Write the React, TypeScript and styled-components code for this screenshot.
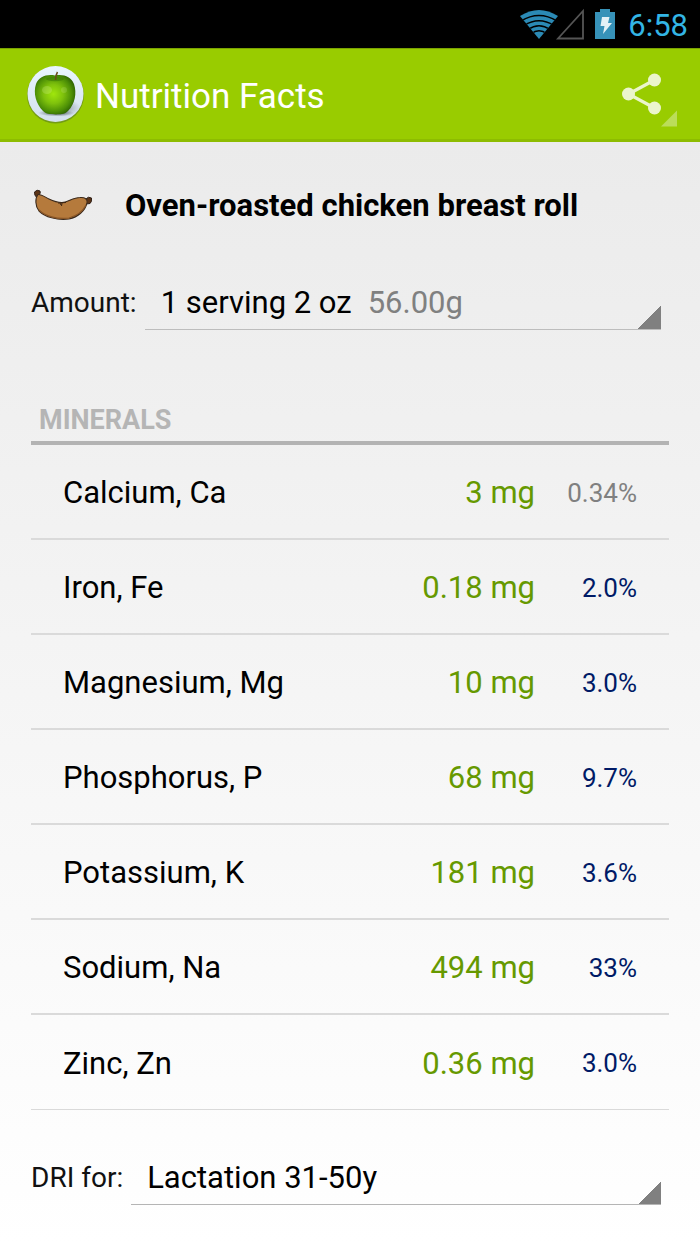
import React from "react";
import styled, { createGlobalStyle } from "styled-components";

const GlobalStyle = createGlobalStyle`
  * { box-sizing: border-box; }
  body {
    margin: 0;
    background: #fff;
    color: #000;
    font-family: Roboto, "Liberation Sans", sans-serif;
  }
`;

const Screen = styled.div`
  display: flex;
  flex-direction: column;
  min-height: 100vh;
`;

const StatusBar = styled.div`
  display: flex;
  align-items: center;
  justify-content: flex-end;
  height: 48px;
  padding-right: 12px;
  background: #000;
`;

const StatusIcons = styled.svg`
  display: block;
  width: 98px;
  height: 48px;
`;

const Clock = styled.time`
  padding: 3px 0 0 11px;
  color: #33b5e5;
  font-size: 31px;
  line-height: 48px;
`;

const AppBar = styled.header`
  display: flex;
  align-items: center;
  height: 94px;
  padding: 0 20px 0 26px;
  background: #99cc00;
  border-top: 1px solid #7ba300;
  border-bottom: 3px solid #8dbc00;
`;

const AppIcon = styled.svg`
  display: block;
  width: 58px;
  height: 60px;
`;

const Title = styled.h1`
  flex: 1;
  margin: 0;
  padding: 6px 0 0 11px;
  color: #fff;
  font-size: 35px;
  font-weight: 400;
  line-height: 44px;
`;

const ShareButton = styled.button`
  padding: 0;
  border: 0;
  background: none;
  cursor: pointer;

  svg {
    display: block;
    width: 60px;
    height: 76px;
  }
`;

const Content = styled.main`
  flex: 1;
  padding: 32px 31px 39px;
  background: linear-gradient(#ebebeb, #fff);
`;

const Food = styled.div`
  display: flex;
  align-items: center;
  height: 64px;
`;

const FoodIcon = styled.svg`
  display: block;
  width: 64px;
  height: 40px;
`;

const FoodName = styled.h2`
  margin: 0;
  padding-left: 30px;
  font-size: 31px;
  font-weight: 700;
  line-height: 40px;
`;

const Field = styled.div<{ $top: number }>`
  display: flex;
  padding: ${(p) => p.$top}px 8px 0 0;
`;

const FieldLabel = styled.label`
  padding-right: 8px;
  color: #111;
  font-size: 28px;
  line-height: 52px;
  white-space: nowrap;
`;

const Spinner = styled.div<{ $line: string }>`
  display: flex;
  flex: 1;
  gap: 16px;
  height: 53px;
  padding-left: 16px;
  border-bottom: 1px solid ${(p) => p.$line};
  background: linear-gradient(135deg, transparent 50%, #808080 50%) right bottom / 24px 24px no-repeat;
  background-origin: border-box;
  background-clip: border-box;
  font-size: 31px;
  line-height: 52px;
`;

const Select = styled.select<{ $fill?: boolean }>`
  flex: ${(p) => (p.$fill ? "1" : "none")};
  field-sizing: content;
  height: 52px;
  margin: 0;
  padding: 0;
  border: 0;
  border-radius: 0;
  appearance: none;
  background: none;
  color: #000;
  font: inherit;
  cursor: pointer;
`;

const Weight = styled.output`
  color: #808080;
`;

const SectionTitle = styled.h3`
  margin: 0;
  padding: 72px 8px 3px;
  border-bottom: 4px solid #b3b3b3;
  color: #b5b5b5;
  font-size: 27px;
  font-weight: 700;
  line-height: 36px;
`;

const Table = styled.table`
  width: 100%;
  border-collapse: separate;
  border-spacing: 0;
`;

const Row = styled.tr`
  th,
  td {
    height: 95px;
    padding-top: 2px;
    border-bottom: 2px solid #dadada;
  }

  &:last-child th,
  &:last-child td {
    border-bottom-width: 1px;
  }
`;

const Nutrient = styled.th`
  padding: 0 0 0 32px;
  font-size: 31px;
  font-weight: 400;
  text-align: left;
`;

const Quantity = styled.td`
  padding: 0;
  color: #669900;
  font-size: 31px;
  text-align: right;
`;

const Percent = styled.td<{ $low?: boolean }>`
  width: 134px;
  padding: 0 32px 0 0;
  color: ${(p) => (p.$low ? "#808080" : "#001a66")};
  font-size: 26px;
  text-align: right;
`;

const minerals = [
  { name: "Calcium, Ca", quantity: "3 mg", percent: "0.34%", low: true },
  { name: "Iron, Fe", quantity: "0.18 mg", percent: "2.0%" },
  { name: "Magnesium, Mg", quantity: "10 mg", percent: "3.0%" },
  { name: "Phosphorus, P", quantity: "68 mg", percent: "9.7%" },
  { name: "Potassium, K", quantity: "181 mg", percent: "3.6%" },
  { name: "Sodium, Na", quantity: "494 mg", percent: "33%" },
  { name: "Zinc, Zn", quantity: "0.36 mg", percent: "3.0%" },
];

function DeviceIcons() {
  return (
    <StatusIcons viewBox="0 0 98 48" aria-hidden="true">
      <defs>
        <clipPath id="fan">
          <path d="M20 39 L1 16 Q20 4 39 16Z" />
        </clipPath>
      </defs>
      <g clipPath="url(#fan)">
        <rect width="44" height="48" fill="#2b8ab5" />
        <g fill="none" stroke="#000" strokeWidth="1.500">
          <path d="M2 21 Q20 10 38 21" />
          <path d="M5 25.500 Q20 16 35 25.500" />
          <path d="M9 29.500 Q20 22 31 29.500" />
          <path d="M12 34 Q20 27.500 28 34" />
        </g>
      </g>
      <path d="M39 38.500 L64 11 V38.500Z" fill="none" stroke="#555" strokeWidth="1.800" />
      <path d="M76 12 h5 v-3 h10 v3 h5 v27 H76Z" fill="#3792b8" />
      <path d="M83 17 h7.500 l-1.500 6 h4 L84 34 l1.500 -8 h-4Z" fill="#e4f1f6" />
    </StatusIcons>
  );
}

function AppleIcon() {
  return (
    <AppIcon viewBox="0 0 58 60" aria-hidden="true">
      <defs>
        <radialGradient id="appleSkin" cx="0.46" cy="0.48" r="0.6">
          <stop offset="0" stopColor="#a0e60c" />
          <stop offset="0.4" stopColor="#7fc20c" />
          <stop offset="0.75" stopColor="#4c8f06" />
          <stop offset="1" stopColor="#265802" />
        </radialGradient>
        <radialGradient id="appleShadow">
          <stop offset="0" stopColor="#1b2a20" stopOpacity="0.9" />
          <stop offset="1" stopColor="#55606a" stopOpacity="0" />
        </radialGradient>
        <linearGradient id="plate" x1="0" y1="0" x2="0" y2="1">
          <stop offset="0" stopColor="#e9f6ff" />
          <stop offset="1" stopColor="#d3e0ee" />
        </linearGradient>
      </defs>
      <circle cx="29.500" cy="31" r="28.500" fill="#5c7d22" opacity="0.6" />
      <circle cx="29.500" cy="30" r="28" fill="url(#plate)" />
      <ellipse cx="37" cy="44" rx="18" ry="9" fill="url(#appleShadow)" opacity="0.5" />
      <ellipse cx="30" cy="49" rx="18" ry="3.500" fill="url(#appleShadow)" />
      <path
        d="M29 11.500 C38 10 45 13 48 20 C51 29 49 40 42 47 C38 51 34 50 30 50.500 C26 50 21 51 17 47 C10 40 7 29 10 20 C13 13 20 10 29 11.500Z"
        fill="url(#appleSkin)"
      />
      <ellipse cx="29" cy="15" rx="9" ry="2.200" fill="#397606" opacity="0.55" />
      <ellipse cx="21" cy="26" rx="5" ry="4" fill="#e9ffc0" opacity="0.2" />
      <ellipse cx="38" cy="26" rx="3" ry="3" fill="#e9ffc0" opacity="0.15" />
      <path d="M29.500 16 C29.500 12.500 30 10.500 31.500 8" fill="none" stroke="#6b4a1c" strokeWidth="1.500" />
    </AppIcon>
  );
}

function ShareIcon() {
  return (
    <svg viewBox="0 0 60 76" aria-hidden="true">
      <g fill="#ebf5cc">
        <path d="M34.500 24 L8.500 38 L34.500 52" fill="none" stroke="#ebf5cc" strokeWidth="3.200" />
        <circle cx="8.500" cy="38" r="6.500" />
        <circle cx="34.500" cy="24" r="6.500" />
        <circle cx="34.500" cy="52" r="6.500" />
      </g>
      <path d="M57 54.500 V70.500 H41Z" fill="#bbdd59" />
    </svg>
  );
}

function SausageIcon() {
  return (
    <FoodIcon viewBox="0 0 64 40" aria-hidden="true">
      <path d="M3.500 6 Q6 3 9 5 Q10 7 8 9 L6 12 Q3 9 3.500 6Z" fill="#5c3416" stroke="#2e2018" strokeWidth="1" />
      <path d="M55 13 Q57 10 60.500 12 Q61 16 59 17.500 L55 18Z" fill="#5c3416" stroke="#2e2018" strokeWidth="1" />
      <path
        d="M7 8.500 C10 8 14 11 18 13 C23 15.500 27 16.500 31 16.500 C37 16 42 11.500 49 11.500 C54 11 57 13.500 56 17 C54 25 47 31 38 33 C26 34.500 14 31 8 25 C4 20 4 12 7 8.500Z"
        fill="#b57a3c"
        stroke="#3b2a1c"
        strokeWidth="1.100"
      />
      <path d="M8 24 C14 30 26 33.500 38 32 C45 30 52 25 55 19" fill="none" stroke="#8a5626" strokeWidth="1.200" />
      <path d="M27 17 L35 16.500 M31 17 L30.500 20 M29 17 L30 19" fill="none" stroke="#3b2412" strokeWidth="1" />
    </FoodIcon>
  );
}

export default function App() {
  return (
    <Screen>
      <GlobalStyle />
      <StatusBar>
        <DeviceIcons />
        <Clock>6:58</Clock>
      </StatusBar>
      <AppBar>
        <AppleIcon />
        <Title>Nutrition Facts</Title>
        <ShareButton type="button" aria-label="Share">
          <ShareIcon />
        </ShareButton>
      </AppBar>
      <Content>
        <Food>
          <SausageIcon />
          <FoodName>Oven-roasted chicken breast roll</FoodName>
        </Food>
        <Field $top={39}>
          <FieldLabel htmlFor="amount">Amount:</FieldLabel>
          <Spinner $line="#bdbdbd">
            <Select id="amount">
              <option>1 serving 2 oz</option>
            </Select>
            <Weight htmlFor="amount">56.00g</Weight>
          </Spinner>
        </Field>
        <SectionTitle id="minerals">MINERALS</SectionTitle>
        <Table aria-labelledby="minerals">
          <tbody>
            {minerals.map((m) => (
              <Row key={m.name}>
                <Nutrient scope="row">{m.name}</Nutrient>
                <Quantity>{m.quantity}</Quantity>
                <Percent $low={m.low}>{m.percent}</Percent>
              </Row>
            ))}
          </tbody>
        </Table>
        <Field $top={42}>
          <FieldLabel htmlFor="dri">DRI for:</FieldLabel>
          <Spinner $line="#b5b5b5">
            <Select id="dri" $fill>
              <option>Lactation 31-50y</option>
            </Select>
          </Spinner>
        </Field>
      </Content>
    </Screen>
  );
}
